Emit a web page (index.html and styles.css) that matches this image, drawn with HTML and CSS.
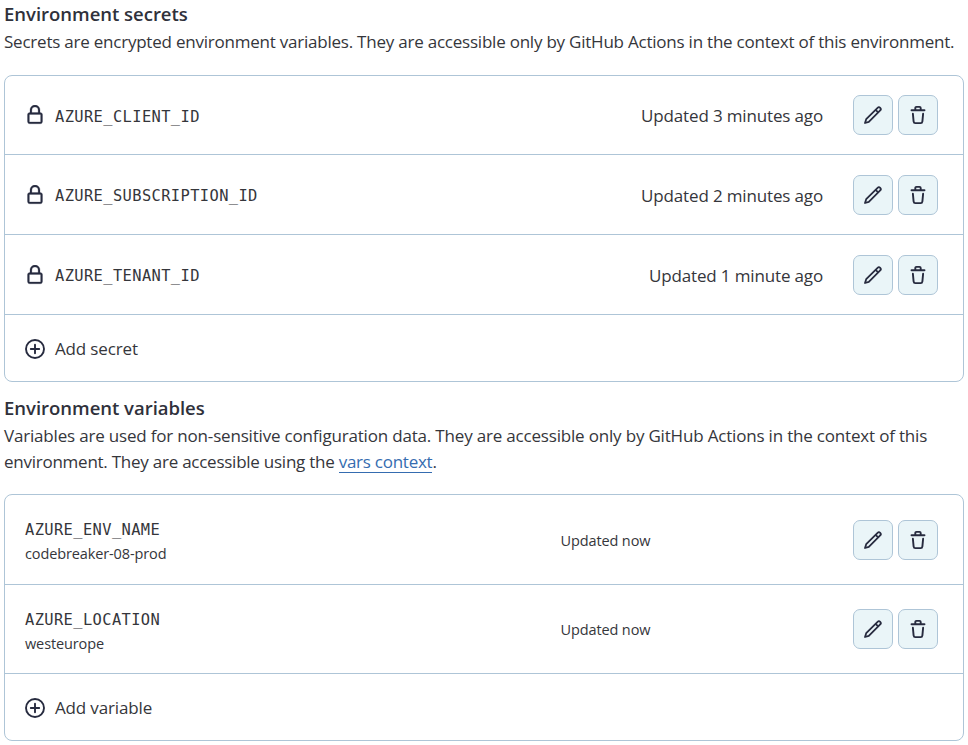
FILE: index.html
```html
<!DOCTYPE html>
<html lang="en">
<head>
<meta charset="utf-8">
<title>Environment settings</title>
<link rel="stylesheet" href="styles.css">
</head>
<body>
<svg class="sprite" aria-hidden="true">
  <symbol id="lock" viewBox="0 0 16 16"><path stroke="currentColor" stroke-width=".2" d="M4 4a4 4 0 0 1 8 0v2h.25c.966 0 1.75.784 1.75 1.75v5.5A1.75 1.75 0 0 1 12.25 15h-8.5A1.75 1.75 0 0 1 2 13.25v-5.5C2 6.784 2.784 6 3.75 6H4Zm8.25 3.5h-8.5a.25.25 0 0 0-.25.25v5.5c0 .138.112.25.25.25h8.5a.25.25 0 0 0 .25-.25v-5.5a.25.25 0 0 0-.25-.25ZM10.5 6V4a2.5 2.5 0 1 0-5 0v2Z"/></symbol>
  <symbol id="plus" viewBox="0 0 20 20"><g fill="none" stroke="currentColor" stroke-width="1.9" stroke-linecap="round"><circle cx="10" cy="10" r="9"/><path d="M10 5.8v8.4M5.8 10h8.4"/></g></symbol>
  <symbol id="pencil" viewBox="0 0 20 20"><g fill="none" stroke="currentColor" stroke-width="1.8" stroke-linejoin="round"><path d="M2 18 3.2 14.2 14.6 2.8a1.8 1.8 0 0 1 2.6 2.6L5.8 16.8Z"/><path d="m12.6 4.8 2.6 2.6"/></g></symbol>
  <symbol id="trash" viewBox="0 0 20 20"><g fill="none" stroke="currentColor" stroke-width="1.9" stroke-linecap="round" stroke-linejoin="round"><path d="M3.5 5.2h13M7.3 5V3.1q0-1.2 1.2-1.2h3q1.2 0 1.2 1.2V5M4.9 8.8l.7 7.6q.2 1.7 1.7 1.7h5.4q1.5 0 1.7-1.7l.7-7.6"/></g></symbol>
</svg>
<main>
  <section>
    <h2>Environment secrets</h2>
    <p>Secrets are encrypted environment variables. They are accessible only by GitHub Actions in the context of this environment.</p>
    <div class="box">
      <div class="row">
        <svg class="icon"><use href="#lock"/></svg><code>AZURE_CLIENT_ID</code>
        <span class="updated">Updated 3 minutes ago</span>
        <div class="actions"><button aria-label="Edit"><svg class="icon"><use href="#pencil"/></svg></button><button aria-label="Delete"><svg class="icon"><use href="#trash"/></svg></button></div>
      </div>
      <div class="row">
        <svg class="icon"><use href="#lock"/></svg><code>AZURE_SUBSCRIPTION_ID</code>
        <span class="updated">Updated 2 minutes ago</span>
        <div class="actions"><button aria-label="Edit"><svg class="icon"><use href="#pencil"/></svg></button><button aria-label="Delete"><svg class="icon"><use href="#trash"/></svg></button></div>
      </div>
      <div class="row">
        <svg class="icon"><use href="#lock"/></svg><code>AZURE_TENANT_ID</code>
        <span class="updated">Updated 1 minute ago</span>
        <div class="actions"><button aria-label="Edit"><svg class="icon"><use href="#pencil"/></svg></button><button aria-label="Delete"><svg class="icon"><use href="#trash"/></svg></button></div>
      </div>
      <div class="row add"><svg class="icon"><use href="#plus"/></svg><span>Add secret</span></div>
    </div>
  </section>
  <section class="variables">
    <h2>Environment variables</h2>
    <p><span class="lead">Variables are used for non-sensitive configuration data. They are accessible only by GitHub Actions in the context of this</span><br><span class="context">environment. They are accessible using the <a href="#">vars context</a>.</span></p>
    <div class="box">
      <div class="row variable">
        <div class="entry"><code>AZURE_ENV_NAME</code><span class="value">codebreaker-08-prod</span></div>
        <span class="now">Updated now</span>
        <div class="actions"><button aria-label="Edit"><svg class="icon"><use href="#pencil"/></svg></button><button aria-label="Delete"><svg class="icon"><use href="#trash"/></svg></button></div>
      </div>
      <div class="row variable">
        <div class="entry"><code>AZURE_LOCATION</code><span class="value">westeurope</span></div>
        <span class="now">Updated now</span>
        <div class="actions"><button aria-label="Edit"><svg class="icon"><use href="#pencil"/></svg></button><button aria-label="Delete"><svg class="icon"><use href="#trash"/></svg></button></div>
      </div>
      <div class="row add"><svg class="icon"><use href="#plus"/></svg><span>Add variable</span></div>
    </div>
  </section>
</main>
</body>
</html>
```
FILE: styles.css
```css
* { box-sizing: border-box; }
body { margin: 0; background: #fff; color: #35363b; font: 17px/26px "Open Sans", "Noto Sans", sans-serif; letter-spacing: -0.15px; }
.sprite { display: none; }
main { padding: 1px 4px 0; }
h2 { margin: 0; font-size: 18.5px; line-height: 26px; font-weight: 600; letter-spacing: -0.02px; color: #2f313b; }
p { margin: 2px 0 20px; white-space: nowrap; letter-spacing: -0.225px; }
.lead { letter-spacing: -0.185px; }
.context { letter-spacing: -0.25px; }
.box { border: 1px solid #aec5d7; border-radius: 8px; }
.row { display: flex; align-items: center; height: 80px; padding: 0 25px 0 20px; border-top: 1px solid #aec5d7; }
.row:first-child { border-top: 0; height: 78px; }
.icon { display: block; flex: none; width: 20px; height: 20px; fill: currentColor; color: #272b3f; }
.row > .icon { margin-right: 10px; }
code { font: 15.4px/24px "DejaVu Sans Mono", monospace; letter-spacing: 0.39px; padding-top: 3px; }
.updated { margin-left: auto; margin-right: 30px; padding-top: 2px; }
.actions { display: flex; gap: 5px; }
button { width: 40px; height: 40px; padding: 9px; border: 1px solid #aec5d7; border-radius: 7px; background: #eaf5f8; }
.row.add { height: 67px; padding-top: 2px; }
.variables { margin-top: 13px; }
.variables p { margin-bottom: 19px; }
a { display: inline-block; height: 23px; line-height: 24px; color: #356cb0; text-decoration: none; border-bottom: 1px solid #356cb0; }
.context { display: block; height: 26px; }
.variables br { display: none; }
.row.variable { height: 89px; display: grid; grid-template-columns: 535.5px 1fr auto; }
.entry { display: flex; flex-direction: column; padding-top: 3px; }
.entry code { line-height: 23px; }
.value, .now { font-size: 14.5px; line-height: 24px; letter-spacing: -0.12px; }
.now { padding-top: 2px; }
```
